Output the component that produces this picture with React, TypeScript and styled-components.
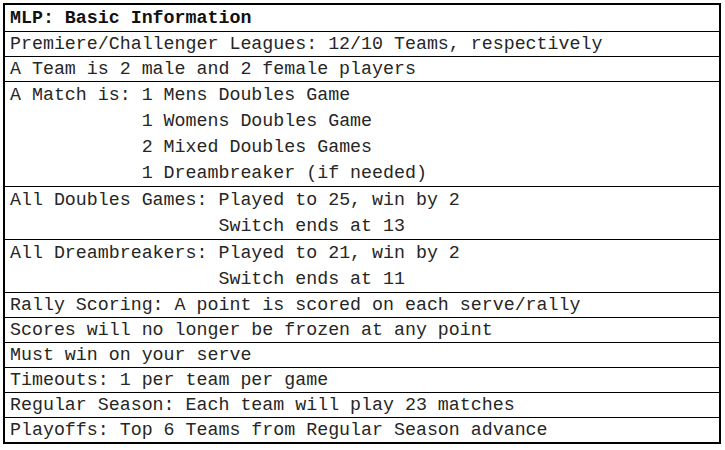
import React from 'react'
import styled, { createGlobalStyle } from 'styled-components'

const GlobalStyle = createGlobalStyle`
  html, body {
    margin: 0;
    padding: 0;
    background: #fff;
  }
`

const Page = styled.div`
  padding: 3px 0 0 3px;
`

const Table = styled.div`
  width: 718px;
  box-sizing: border-box;
  border: 2px solid #000;
  font-family: 'Liberation Mono', 'Courier New', monospace;
  font-size: 18.3px;
  color: #262626;
`

const Header = styled.div`
  padding: 0 5px;
  line-height: 26px;
  font-weight: bold;
  color: #111;
  border-bottom: 1px solid #000;
`

const Row = styled.div<{ $multi: boolean }>`
  display: flex;
  padding: 0 5px;
  line-height: ${(p) => (p.$multi ? '26px' : '24px')};
  border-bottom: 1px solid #000;

  &:last-child {
    border-bottom: none;
  }
`

const Label = styled.div<{ $chars: number }>`
  flex: 0 0 ${(p) => p.$chars}ch;
  white-space: pre;
`

const Lines = styled.div`
  display: flex;
  flex-direction: column;
  white-space: pre;
`

type Item = { label?: string; lines: string[] }

const items: Item[] = [
  { lines: ['Premiere/Challenger Leagues: 12/10 Teams, respectively'] },
  { lines: ['A Team is 2 male and 2 female players'] },
  {
    label: 'A Match is: ',
    lines: [
      '1 Mens Doubles Game',
      '1 Womens Doubles Game',
      '2 Mixed Doubles Games',
      '1 Dreambreaker (if needed)',
    ],
  },
  { label: 'All Doubles Games: ', lines: ['Played to 25, win by 2', 'Switch ends at 13'] },
  { label: 'All Dreambreakers: ', lines: ['Played to 21, win by 2', 'Switch ends at 11'] },
  { lines: ['Rally Scoring: A point is scored on each serve/rally'] },
  { lines: ['Scores will no longer be frozen at any point'] },
  { lines: ['Must win on your serve'] },
  { lines: ['Timeouts: 1 per team per game'] },
  { lines: ['Regular Season: Each team will play 23 matches'] },
  { lines: ['Playoffs: Top 6 Teams from Regular Season advance'] },
]

const App = () => {
  return (
    <Page>
      <GlobalStyle />
      <Table>
        <Header>MLP: Basic Information</Header>
        {items.map((item, index) => (
          <Row key={index} $multi={item.lines.length > 1}>
            {item.label && <Label $chars={item.label.length}>{item.label}</Label>}
            <Lines>
              {item.lines.map((line) => (
                <span key={line}>{line}</span>
              ))}
            </Lines>
          </Row>
        ))}
      </Table>
    </Page>
  )
}

export default App
